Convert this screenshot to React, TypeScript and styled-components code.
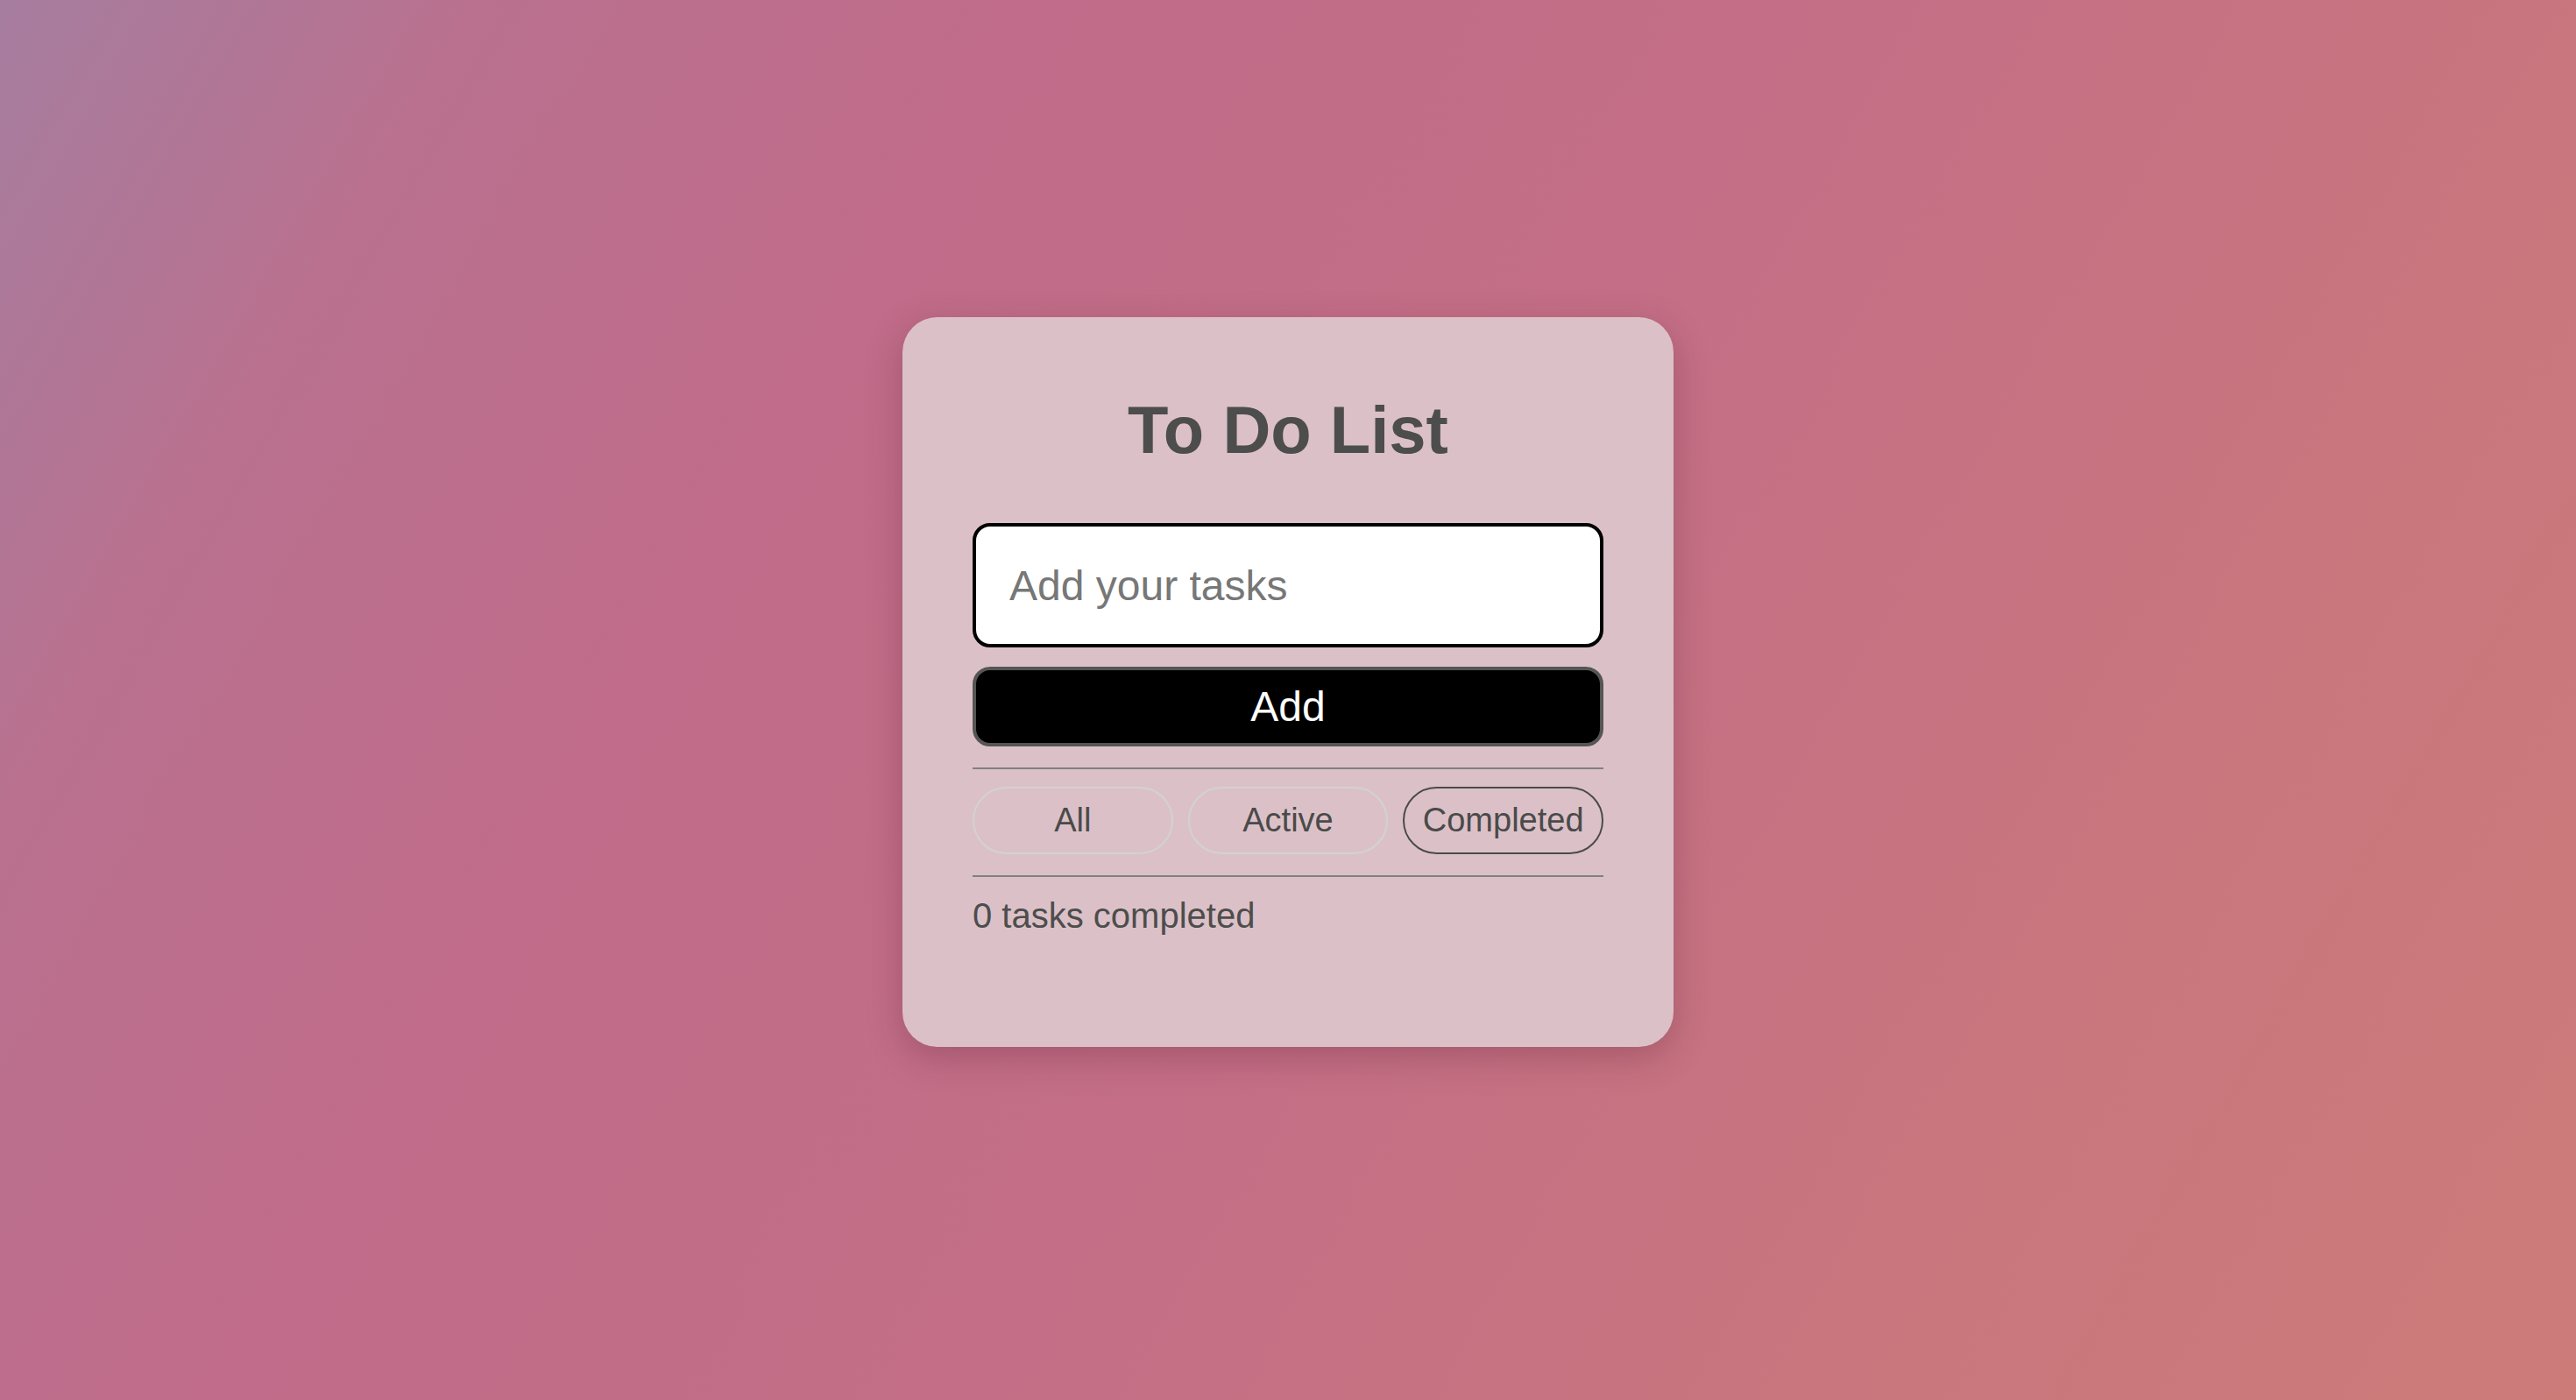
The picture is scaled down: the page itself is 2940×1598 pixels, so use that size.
import React, { useState } from 'react';
import styled, { createGlobalStyle } from 'styled-components';

type Filter = 'all' | 'active' | 'completed';

interface Task {
  id: number;
  text: string;
  done: boolean;
}

const GlobalStyle = createGlobalStyle`
  html, body {
    margin: 0;
    padding: 0;
  }
  body {
    font-family: "Liberation Sans", Arial, Helvetica, sans-serif;
  }
  * {
    box-sizing: border-box;
  }
`;

const App = () => {
  const [tasks, setTasks] = useState<Task[]>([]);
  const [value, setValue] = useState<string>('');
  const [filter, setFilter] = useState<Filter>('completed');

  const handleAdd = () => {
    if (!value.trim()) return;
    setTasks([...tasks, { id: Date.now(), text: value.trim(), done: false }]);
    setValue('');
  };

  const visible = tasks.filter((t) =>
    filter === 'all' ? true : filter === 'active' ? !t.done : t.done
  );
  const doneCount = tasks.filter((t) => t.done).length;

  return (
    <>
      <GlobalStyle />
      <Page>
        <Card>
          <Title>To Do List</Title>
          <TaskInput
            type="text"
            placeholder="Add your tasks"
            value={value}
            onChange={(e) => setValue(e.target.value)}
          />
          <AddButton type="button" onClick={handleAdd}>Add</AddButton>
          <Divider />
          <Filters>
            <FilterButton $active={filter === 'all'} onClick={() => setFilter('all')}>All</FilterButton>
            <FilterButton $active={filter === 'active'} onClick={() => setFilter('active')}>Active</FilterButton>
            <FilterButton $active={filter === 'completed'} onClick={() => setFilter('completed')}>Completed</FilterButton>
          </Filters>
          <Divider />
          <Count>{doneCount} tasks completed</Count>
          <TaskList>
            {visible.map((t) => (
              <li key={t.id}>{t.text}</li>
            ))}
          </TaskList>
        </Card>
      </Page>
    </>
  );
};

export default App;

const Page = styled.div`
  min-height: 100vh;
  display: flex;
  justify-content: center;
  align-items: flex-start;
  padding-top: 362px;
  background: linear-gradient(
    120deg,
    #a67d9f 0%,
    #b9718f 14%,
    #c06c8a 30%,
    #c46f86 55%,
    #c9767e 78%,
    #cd7b79 100%
  );
`;

const Card = styled.div`
  width: 880px;
  min-height: 833px;
  padding: 80px 80px 127px;
  display: flex;
  flex-direction: column;
  border-radius: 40px;
  background-color: #dbc1c7;
  box-shadow: 0 12px 40px rgba(90, 30, 50, 0.3);
`;

const Title = styled.h1`
  margin: 5px 0 63px;
  font-size: 76px;
  font-weight: 700;
  line-height: 87px;
  text-align: center;
  color: #4d4d4d;
`;

const TaskInput = styled.input`
  height: 142px;
  padding: 0 38px;
  border: 4px solid #000;
  border-radius: 20px;
  background: #fff;
  font-family: inherit;
  font-size: 48px;
  color: #222;
  outline: none;

  &::placeholder {
    color: #777;
  }
`;

const AddButton = styled.button`
  margin-top: 22px;
  height: 91px;
  border: 4px solid #555;
  border-radius: 20px;
  background: #000;
  color: #fff;
  font-family: inherit;
  font-size: 48px;
  cursor: pointer;
`;

const Divider = styled.hr`
  margin: 24px 0 20px;
  border: none;
  border-top: 2px solid #808080;
  height: 0;
`;

const Filters = styled.div`
  display: grid;
  grid-template-columns: repeat(3, 1fr);
  gap: 17px;
`;

const FilterButton = styled.button<{ $active: boolean }>`
  height: 77px;
  border: 2px solid ${(p) => (p.$active ? '#4a4a4a' : '#d2d2d2')};
  border-radius: 40px;
  background: transparent;
  color: #4a4a4a;
  font-family: inherit;
  font-size: 38px;
  cursor: pointer;
`;

const Count = styled.p`
  margin: 1px 0 0;
  font-size: 40px;
  line-height: 46px;
  color: #4d4d4d;
`;

const TaskList = styled.ul`
  margin: 0;
  padding: 0;
  list-style: none;
`;
